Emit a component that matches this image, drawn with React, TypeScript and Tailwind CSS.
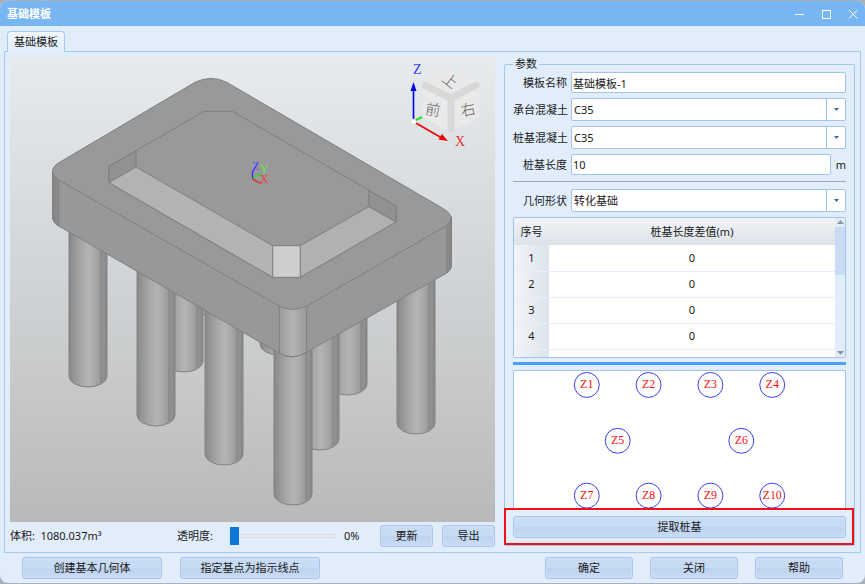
import { useState } from 'react'
import type { ReactNode } from 'react'

const grades = ['C25', 'C30', 'C35', 'C40']
const shapes = ['转化基础', '矩形基础', '圆形基础']

const diffs = [0, 0, 0, 0]

// back to front
const piles = [
  { x: 186, top: 285, bottom: 315 },
  { x: 260, top: 320, bottom: 355 },
  { x: 165, top: 250, bottom: 372 },
  { x: 329, top: 300, bottom: 395 },
  { x: 301, top: 320, bottom: 450 },
  { x: 397, top: 240, bottom: 434 },
  { x: 69, top: 200, bottom: 387 },
  { x: 137, top: 240, bottom: 426 },
  { x: 205, top: 280, bottom: 465 },
  { x: 274, top: 320, bottom: 505 },
]

const planPiles = [
  { name: 'Z1', x: 73, y: 14 },
  { name: 'Z2', x: 135, y: 14 },
  { name: 'Z3', x: 197, y: 14 },
  { name: 'Z4', x: 259, y: 14 },
  { name: 'Z5', x: 104, y: 70 },
  { name: 'Z6', x: 228, y: 70 },
  { name: 'Z7', x: 73, y: 125 },
  { name: 'Z8', x: 135, y: 125 },
  { name: 'Z9', x: 197, y: 125 },
  { name: 'Z10', x: 259, y: 125 },
]

function Button({ children, className }: { children: ReactNode; className: string }) {
  return (
    <button
      type="button"
      className={`h-[22px] rounded-[3px] border border-[#a9c5ec] bg-[linear-gradient(#d2e2f7,#c8dbf4_15%,#c8dbf4_50%,#bed3ef_52%,#cadbf4)] text-center whitespace-nowrap shadow-[inset_0_0_0_1px_#ccddf5] ${className}`}
    >
      {children}
    </button>
  )
}

function Row({ id, label, children }: { id: string; label: string; children: ReactNode }) {
  return (
    <div className="flex items-center">
      <label htmlFor={id} className="w-[58px] shrink-0 pr-1 text-right whitespace-nowrap">
        {label}
      </label>
      {children}
    </div>
  )
}

function Select({ id, value, options }: { id: string; value: string; options: string[] }) {
  return (
    <div className="relative h-[23px] flex-1">
      <select
        id={id}
        defaultValue={value}
        className="h-full w-full appearance-none rounded-[2px] border border-[#a3c3ef] bg-white pr-5 pl-0.5"
      >
        {options.map((option) => (
          <option key={option}>{option}</option>
        ))}
      </select>
      <span className="pointer-events-none absolute inset-y-0 right-0 flex w-5 items-center justify-center border-l border-[#a3c3ef]">
        <svg viewBox="0 0 5 3" className="h-[3px] w-[5px]">
          <path d="M0 0h5L2.500 3z" fill="#3b69a8" />
        </svg>
      </span>
    </div>
  )
}

function Pile({ x, top, bottom }: { x: number; top: number; bottom: number }) {
  const side = bottom - 11
  const right = x + 38
  return (
    <g>
      <path
        d={`M${x} ${top}V${side}A19 11 0 0 0 ${right} ${side}V${top}Z`}
        fill="url(#pile)"
        stroke="#828282"
      />
      <path d={`M${right - 6} ${top}V${side + 7}`} stroke="#838383" />
      <path d={`M${right - 1} ${top}V${side + 2}`} stroke="#858585" strokeWidth="0.800" />
    </g>
  )
}

function ModelView() {
  return (
    <svg
      viewBox="10 56 485 466"
      preserveAspectRatio="xMidYMid slice"
      role="img"
      aria-label="基础模板"
      className="min-h-0 w-full flex-1 bg-linear-to-b from-[#e7ebed] via-[#d0d3d5] to-[#b9b9b9]"
    >
      <defs>
        <linearGradient id="pile">
          <stop offset="0" stopColor="#888888" />
          <stop offset="0.300" stopColor="#a5a5a5" />
          <stop offset="0.500" stopColor="#b3b3b3" />
          <stop offset="0.650" stopColor="#acacac" />
          <stop offset="0.840" stopColor="#989898" />
          <stop offset="0.860" stopColor="#929292" />
          <stop offset="1" stopColor="#8b8b8b" />
        </linearGradient>
        <linearGradient id="corner">
          <stop offset="0" stopColor="#9b9b9b" />
          <stop offset="0.500" stopColor="#b3b3b3" />
          <stop offset="0.900" stopColor="#a0a0a0" />
          <stop offset="1" stopColor="#999999" />
        </linearGradient>
      </defs>

      <g fill="none">
        {piles.map((pile) => (
          <Pile key={pile.x} {...pile} />
        ))}
      </g>

      {/* cap */}
      <g stroke="#7f7f7f" strokeLinejoin="round">
        <path
          d="M52.500 171V218Q53 223 58.700 226L279.300 353.300Q293 361 306.700 352L446.700 273Q452 269 451.500 265V217L293 300Z"
          fill="#989898"
        />
        <path d="M52.500 171V218Q53 222 58.700 226V180Q53 176 52.500 171Z" fill="#8c8c8c" />
        <path d="M451.500 217V265Q452 269 446.700 273V226Q451 222 451.500 217Z" fill="#8d8d8d" />
        <path d="M54.500 176V221M449.500 221V270" fill="none" />
        <path d="M279.300 306V353.300Q293 361 306.700 352V306Z" fill="url(#corner)" />
        <path
          d="M195 82.300Q211 74.500 226.700 82.300L443 208.500Q457 216.500 446.700 225.700L306.700 306Q293 313 279.300 306L58.700 180Q47.500 171.500 56.700 164Z"
          fill="#999999"
        />
        <path d="M204 111.300H232.300L396 206V222L300 277.300H272.700L109 182.700V166.300Z" fill="#999999" />
        <path d="M109 166.300L136 151.300V167L109 182.700Z" fill="#929292" />
        <path d="M368.700 190.700L396 206V222L368.700 206.700Z" fill="#919191" />
        <path d="M109 182.700L136 167L272.700 245.700V277.300Z" fill="#b3b3b3" />
        <path d="M300.300 245.700L368.700 206.700L396 222L300.300 277.300Z" fill="#b1b1b1" />
        <path d="M272.700 245.700H300.300V277.300H272.700Z" fill="#cecece" />
      </g>

      {/* origin */}
      <g fill="none">
        <path d="M252.500 179V172L258 162.500" stroke="#2828ee" strokeWidth="1.300" />
        <path d="M252.500 178.500L261 173.500" stroke="#20e020" strokeWidth="1.200" />
        <path d="M252.500 179L259.500 183H262" stroke="#f01818" strokeWidth="1.200" />
      </g>
      <g className="font-['Liberation_Serif',serif] text-[12px]">
        <text x="252" y="170" fill="#5c5cf0">Z</text>
        <text x="260" y="173" fill="#58ee58">Y</text>
        <text x="260" y="183" fill="#f04040">X</text>
      </g>

      {/* view cube */}
      <path
        d="M447 69Q451 67 455 69L479 83V115Q479 118 476 119L451 132L425 119Q423 118 423 115V83Z"
        fill="#e9e9e9"
      />
      <path
        d="M425.500 85.500L451 98L476 85.500M451 98V129"
        fill="none"
        stroke="#d8d8d8"
        strokeWidth="7"
        strokeLinecap="round"
        strokeLinejoin="round"
      />
      <g
        fill="#606060"
        textAnchor="middle"
        className="font-['Noto_Sans_CJK_SC',sans-serif] text-[15px] font-light"
      >
        <text transform="rotate(8 433 110)" x="433" y="115">前</text>
        <text transform="rotate(-12 468 110)" x="468" y="115">右</text>
        <text transform="rotate(38 450 81)" x="450" y="86">上</text>
      </g>
      <path d="M414 121L422 117" stroke="#22e022" strokeWidth="2" />
      <path d="M413.500 120V90" stroke="#0000ee" strokeWidth="1.600" />
      <path d="M413.500 82L416.500 91H410.500Z" fill="#0000ee" />
      <path d="M415 122.500L441 137.500" stroke="#ee0000" strokeWidth="1.600" />
      <path d="M448 141L438.500 139.500L442 134Z" fill="#ee0000" />
      <circle cx="413.500" cy="121.700" r="2.800" fill="#ffffff" stroke="#cccccc" strokeWidth="0.600" />
      <g className="font-['Liberation_Serif',serif] text-[14px]">
        <text x="413" y="74" fill="#3a3af0">Z</text>
        <text x="455" y="146" fill="#f03030">X</text>
      </g>
    </svg>
  )
}

function DiffTable() {
  return (
    <div className="flex h-[141px] overflow-hidden rounded-[2px] border border-[#a3c3ef] bg-white">
      <div className="min-w-0 flex-1 overflow-hidden">
        <table className="w-full table-fixed border-collapse text-center">
          <thead>
            <tr className="h-[27px] bg-linear-to-b from-[#f2f5f8] to-[#dce2e9]">
              <th className="w-[35px] font-normal">序号</th>
              <th className="font-normal">桩基长度差值(m)</th>
            </tr>
          </thead>
          <tbody>
            {diffs.map((diff, i) => (
              <tr key={i} className="h-[26px] border-b border-[#e6effb]">
                <th className="bg-linear-to-r from-[#f2f5f8] to-[#dce3eb] font-normal">{i + 1}</th>
                <td>{diff}</td>
              </tr>
            ))}
            <tr className="h-[26px]">
              <th className="bg-linear-to-r from-[#f2f5f8] to-[#dce3eb]" />
              <td />
            </tr>
          </tbody>
        </table>
      </div>
      <div className="flex w-[10px] flex-col items-center bg-[#e2edfc] py-0.5">
        <svg viewBox="0 0 7 4" className="h-1 w-[7px]">
          <path d="M0 4h7L3.500 0z" fill="#8f959c" />
        </svg>
        <div className="mt-[3px] h-12 w-full bg-[#c9dcf4]" />
        <svg viewBox="0 0 7 4" className="mt-auto h-1 w-[7px]">
          <path d="M0 0h7L3.500 4z" fill="#8f959c" />
        </svg>
      </div>
    </div>
  )
}

function PilePlan() {
  return (
    <div className="flex min-h-[139px] flex-1 rounded-[2px] border border-b-0 border-[#a3c3ef] bg-white">
      <svg viewBox="0 0 332 139" preserveAspectRatio="xMidYMin meet" className="h-[139px] w-full">
        {planPiles.map(({ name, x, y }) => (
          <g key={name}>
            <circle cx={x} cy={y} r="12.500" fill="none" stroke="#3c3cf5" />
            <text
              x={x}
              y={y + 3}
              textAnchor="middle"
              fill="#ff1010"
              className="font-['Liberation_Serif',serif] text-[12px]"
            >
              {name}
            </text>
          </g>
        ))}
      </svg>
    </div>
  )
}

export default function App() {
  const [opacity, setOpacity] = useState(0)

  return (
    <div className="min-h-screen bg-[#a9b0b8] pt-px pb-0.5 font-['Noto_Sans','Noto_Sans_CJK_SC',sans-serif] text-[11px] leading-4 text-[#1a1a1a]">
      <div className="flex min-h-[calc(100vh-3px)] flex-col rounded-lg bg-[#e2edfc]">
        <header className="flex h-[25px] items-center justify-between rounded-t-lg bg-[#77b5f3] px-[7px] text-white">
          <h1 className="font-bold">基础模板</h1>
          <div className="flex gap-[17px]">
            <button type="button" aria-label="最小化">
              <svg viewBox="0 0 10 10" className="size-[10px]">
                <path d="M1 5.500h9" stroke="currentColor" />
              </svg>
            </button>
            <button type="button" aria-label="最大化">
              <svg viewBox="0 0 10 10" className="size-[10px]">
                <rect x="1.500" y="1.500" width="8" height="8" fill="none" stroke="currentColor" />
              </svg>
            </button>
            <button type="button" aria-label="关闭窗口">
              <svg viewBox="0 0 10 10" className="size-[10px]">
                <path d="M1 1l8.500 8.500M9.500 1L1 9.500" fill="none" stroke="currentColor" />
              </svg>
            </button>
          </div>
        </header>

        <main className="flex flex-1 flex-col px-1 pt-[5px]">
          <div role="tablist" className="flex pl-[3px]">
            <button
              type="button"
              role="tab"
              aria-selected="true"
              className="z-10 -mb-px h-[21px] rounded-t-[4px] border border-b-0 border-[#a3ccf5] bg-linear-to-b from-[#f1f6fe] to-[#e2edfc] px-1.5"
            >
              基础模板
            </button>
          </div>

          <div className="grid flex-1 grid-cols-[485fr_351fr] gap-[9px] border border-[#a3c8f4] px-[5px] pt-1">
            {/* model */}
            <section className="flex min-w-0 flex-col">
              <ModelView />
              <div className="mb-0.5 flex h-[28px] items-center">
                <span className="flex-1 whitespace-nowrap">体积:&ensp;1080.037m³</span>
                <label htmlFor="opacity" className="mr-4 whitespace-nowrap">透明度:</label>
                <input
                  id="opacity"
                  type="range"
                  min={0}
                  max={100}
                  value={opacity}
                  onChange={(e) => setOpacity(Number(e.target.value))}
                  className="h-[18px] w-[106px] appearance-none bg-transparent [&::-webkit-slider-runnable-track]:h-1 [&::-webkit-slider-runnable-track]:border [&::-webkit-slider-runnable-track]:border-[#d9dde3] [&::-webkit-slider-runnable-track]:bg-[#e9ecef] [&::-webkit-slider-thumb]:-mt-2 [&::-webkit-slider-thumb]:h-[18px] [&::-webkit-slider-thumb]:w-[9px] [&::-webkit-slider-thumb]:appearance-none [&::-webkit-slider-thumb]:bg-[#0a78d7]"
                />
                <output htmlFor="opacity" className="ml-[9px] w-[36px]">{opacity}%</output>
                <Button className="w-[53px]">更新</Button>
                <Button className="ml-[9px] w-[53px]">导出</Button>
              </div>
            </section>

            {/* parameters */}
            <fieldset className="relative mb-1.5 flex min-w-0 flex-col gap-[5px] rounded-[2px] border border-[#a3c3ef] px-2 pb-[7px]">
              <legend className="px-0.5">参数</legend>
              <Row id="name" label="模板名称">
                <input
                  id="name"
                  defaultValue="基础模板-1"
                  className="h-[21px] min-w-0 flex-1 rounded-[2px] border border-[#a3c3ef] bg-white px-px"
                />
              </Row>
              <Row id="cap-grade" label="承台混凝土">
                <Select id="cap-grade" value="C35" options={grades} />
              </Row>
              <Row id="pile-grade" label="桩基混凝土">
                <Select id="pile-grade" value="C35" options={grades} />
              </Row>
              <Row id="pile-length" label="桩基长度">
                <input
                  id="pile-length"
                  defaultValue="10"
                  className="h-[21px] min-w-0 flex-1 rounded-[2px] border border-[#a3c3ef] bg-white px-px"
                />
                <span className="w-[15px] text-right">m</span>
              </Row>
              <hr className="mt-px mb-0.5 border-[#a0a8b2]" />
              <Row id="shape" label="几何形状">
                <Select id="shape" value="转化基础" options={shapes} />
              </Row>
              <DiffTable />
              <div className="-mt-px h-[3px] bg-[#4ba0f5]" />
              <PilePlan />
              <Button className="w-full">提取桩基</Button>
              <div className="pointer-events-none absolute right-0 bottom-0 -left-px h-[37px] border-2 border-[#f01018]" />
            </fieldset>
          </div>
        </main>

        <footer className="flex items-center px-[22px] pt-1 pb-1">
          <Button className="w-[140px]">创建基本几何体</Button>
          <Button className="mr-auto ml-[18px] w-[140px]">指定基点为指示线点</Button>
          <div className="flex gap-[17px]">
            <Button className="w-[88px]">确定</Button>
            <Button className="w-[88px]">关闭</Button>
            <Button className="w-[88px]">帮助</Button>
          </div>
        </footer>
      </div>
    </div>
  )
}
